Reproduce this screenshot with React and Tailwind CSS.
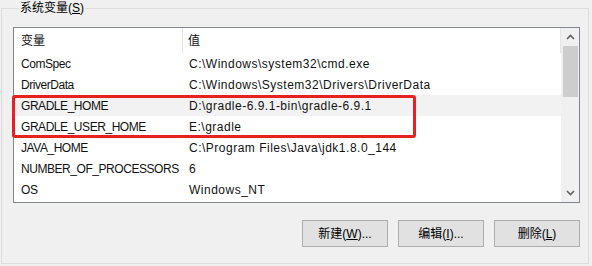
const rows = [
  { name: 'ComSpec', value: 'C:\\Windows\\system32\\cmd.exe' },
  { name: 'DriverData', value: 'C:\\Windows\\System32\\Drivers\\DriverData' },
  { name: 'GRADLE_HOME', value: 'D:\\gradle-6.9.1-bin\\gradle-6.9.1', hover: true },
  { name: 'GRADLE_USER_HOME', value: 'E:\\gradle' },
  { name: 'JAVA_HOME', value: 'C:\\Program Files\\Java\\jdk1.8.0_144' },
  { name: 'NUMBER_OF_PROCESSORS', value: '6' },
  { name: 'OS', value: 'Windows_NT' },
];

const font = "font-['Liberation_Sans','Noto_Sans_CJK_SC',sans-serif]";

function WinButton({ label, hotkey, suffix }) {
  return (
    <button className="w-[86px] h-[27px] border border-[#adadad] bg-[#e1e1e1] text-[12px] text-black flex items-center justify-center">
      {label}(<span className="underline">{hotkey}</span>){suffix}
    </button>
  );
}

export default function App() {
  return (
    <div className={`w-[592px] h-[266px] bg-[#f0f0f0] ${font} text-[12px] text-[#111]`}>
      <fieldset className="ml-[1px] w-[588px] h-[264px] border border-[#dcdcdc] pl-[11px] pr-[7px]">
        <legend className="ml-[6px] px-[1px] leading-[16px] text-[12px] text-black">
          系统变量(<span className="underline">S</span>)
        </legend>

        {/* list view */}
        <div className="relative mt-[11px] w-[567px] h-[176px] border border-[#828790] bg-white flex">
          <div className="w-[547px] flex flex-col">
            <div className="h-[25px] flex items-center shrink-0">
              <div className="w-[169px] h-full pl-[7px] flex items-center border-r border-[#e5e5e5]">变量</div>
              <div className="flex-1 h-full pl-[5px] flex items-center border-r border-[#e5e5e5]">值</div>
            </div>
            {rows.map((r) => (
              <div
                key={r.name}
                className={`h-[21px] flex items-center shrink-0 ${r.hover ? 'bg-[#f2f2f2]' : ''}`}
              >
                <div className="w-[169px] pl-[7px] whitespace-nowrap tracking-[-0.45px]">{r.name}</div>
                <div className="pl-[6px] whitespace-nowrap tracking-[0.5px]">{r.value}</div>
              </div>
            ))}
          </div>

          {/* scrollbar */}
          <div className="w-[18px] h-full bg-[#f0f0f0] flex flex-col items-center">
            <div className="h-[18px] w-full flex items-center justify-center">
              <svg width="9" height="6" viewBox="0 0 9 6">
                <path d="M1 5 L4.5 1.5 L8 5" fill="none" stroke="#606060" strokeWidth="1.6" />
              </svg>
            </div>
            <div className="w-[15px] h-[51px] bg-[#cdcdcd]" />
            <div className="flex-1" />
            <div className="h-[18px] w-full flex items-center justify-center">
              <svg width="9" height="6" viewBox="0 0 9 6">
                <path d="M1 1 L4.5 4.5 L8 1" fill="none" stroke="#606060" strokeWidth="1.6" />
              </svg>
            </div>
          </div>

          {/* red annotation box */}
          <div className="absolute left-[-2px] top-[67px] w-[404px] h-[43px] border-[3px] border-[#e8201f] rounded-[3px]" />
        </div>

        <div className="mt-[17px] flex justify-end gap-[10px] w-[567px]">
          <WinButton label="新建" hotkey="W" suffix="..." />
          <WinButton label="编辑" hotkey="I" suffix="..." />
          <WinButton label="删除" hotkey="L" suffix="" />
        </div>
      </fieldset>
    </div>
  );
}
